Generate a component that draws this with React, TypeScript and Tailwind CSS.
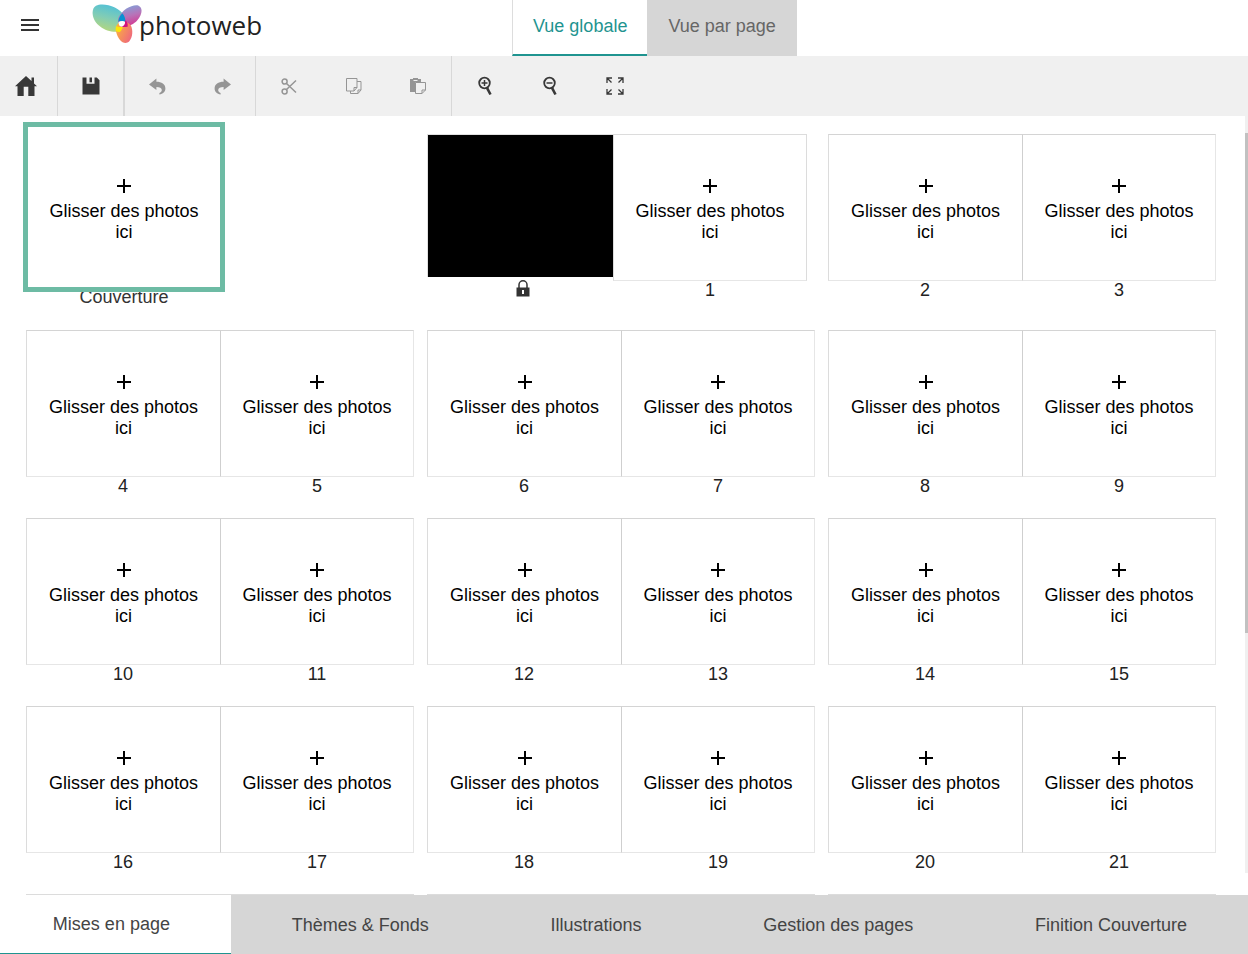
import React from "react"
import clsx from "clsx"

type IconProps = { className?: string }

function HomeIcon() {
  return (
    <svg width="22" height="20" viewBox="0 0 22 20" fill="currentColor" aria-hidden="true">
      <path d="M11 0 16.500 5V1.600H19v5.800l3 2.900h-2.500V20h-6.200v-9.300H8.700V20H2.500v-9.700H0z" />
    </svg>
  )
}

function SaveIcon() {
  return (
    <svg width="18" height="18" viewBox="0 0 18 18" fill="currentColor" aria-hidden="true">
      <path d="M.5.5H4.500v6.200h8V.5h2.300l2.700 2.700v14.300H.5z" />
      <path d="M7.500.5h2.500v4.800H7.500z" />
    </svg>
  )
}

function UndoIcon({ className }: IconProps) {
  return (
    <svg width="17" height="17" viewBox="0 0 17 17" fill="currentColor" className={className} aria-hidden="true">
      <path d="M0 6.400 7.400.5v3.300c5.200 0 9 2.400 9 6.700 0 3.200-2.500 5.500-6 5.900v-1.300c1.500-.6 2.400-1.600 2.400-3 0-2.200-2.100-3.200-5.400-3.200V12z" />
    </svg>
  )
}

function CutIcon() {
  return (
    <svg width="16" height="17" viewBox="0 0 16 17" fill="none" stroke="currentColor" strokeWidth="1.500" aria-hidden="true">
      <circle cx="3.600" cy="3.600" r="2.500" />
      <circle cx="3.600" cy="13.400" r="2.500" />
      <path d="M5.500 5.500 15 14.500M5.500 11.500 15 2.500" />
    </svg>
  )
}

function CopyIcon() {
  return (
    <svg width="16" height="17" viewBox="0 0 16 17" fill="none" stroke="currentColor" aria-hidden="true">
      <path d="M.5.500h10.500v9l-3 3.500H.5zM11 9.500H8V13" />
      <path d="M11 3.500h4v8.500l-3 3.500H4.500V13M15 12h-3v3.500" />
    </svg>
  )
}

function PasteIcon() {
  return (
    <svg width="17" height="17" viewBox="0 0 17 17" fill="none" stroke="currentColor" aria-hidden="true">
      <path d="M0 1h3V0h5v1h3v3H5.500v10H0z" fill="currentColor" stroke="none" />
      <path d="M3.500 2.500h4" stroke="#f0f0f0" />
      <path d="M5.500 4.500h10v7.500l-3.500 3.500H5.500zM15.500 12H12v3.500" fill="#f0f0f0" />
    </svg>
  )
}

function ZoomIcon({ plus }: { plus?: boolean }) {
  return (
    <svg width="16" height="20" viewBox="0 0 16 20" fill="none" stroke="currentColor" aria-hidden="true">
      <circle cx="7.500" cy="7" r="5.300" strokeWidth="1.800" />
      <path d="m10 11.800 3.500 6.700" strokeWidth="2.600" />
      <path d={plus ? "M4.500 7h6M7.500 4v6" : "M4.500 7h6"} strokeWidth="1.500" />
    </svg>
  )
}

function FullscreenIcon() {
  return (
    <svg width="18" height="18" viewBox="0 0 18 18" fill="none" stroke="currentColor" strokeWidth="1.300" aria-hidden="true">
      <path d="M1 6V1h5M1 1l4.500 4.500M12 1h5v5M17 1l-4.500 4.500M1 12v5h5M1 17l4.500-4.500M17 12v5h-5M17 17l-4.500-4.500" />
    </svg>
  )
}

function LockIcon() {
  return (
    <svg width="14" height="17" viewBox="0 0 14 17" aria-hidden="true">
      <path d="M3 8V4.800a4 4 0 0 1 8 0V8" fill="none" stroke="#333" strokeWidth="1.500" />
      <path d="M.500 7.500h13v9H.500z" fill="#333" />
      <path d="M6 10h2v4H6z" fill="#fff" />
    </svg>
  )
}

function Logo() {
  return (
    <a href="#" aria-label="photoweb" className="flex items-center">
      <svg width="50" height="40" viewBox="0 0 150 120" aria-hidden="true">
        <defs>
          <linearGradient id="wingLeft" x1="0.600" y1="0" x2="0.300" y2="1">
            <stop offset="0" stopColor="#4fc0d8" />
            <stop offset="0.500" stopColor="#83cdb4" />
            <stop offset="1" stopColor="#b9d878" />
          </linearGradient>
          <linearGradient id="wingRight" x1="0.300" y1="0" x2="0.600" y2="1">
            <stop offset="0" stopColor="#7fa3da" />
            <stop offset="0.500" stopColor="#b873b8" />
            <stop offset="1" stopColor="#d6338f" />
          </linearGradient>
          <linearGradient id="wingBottom" x1="0" y1="0.200" x2="1" y2="0.800">
            <stop offset="0" stopColor="#fbb43c" />
            <stop offset="1" stopColor="#ee6480" />
          </linearGradient>
        </defs>
        <path d="M12 5C34-6 82 8 98 36c8 16 4 42-18 47C44 88 4 62 2 30 1 20 4 9 12 5z" fill="url(#wingLeft)" />
        <path d="M80 40C92 16 122 0 140 5c14 7 10 28-4 44-12 14-32 22-46 18-10-4-14-16-10-27z" fill="url(#wingRight)" />
        <path d="M74 64c10-16 32-14 42 0 8 14 6 36-4 48-8 8-20 6-28-4-10-12-16-32-10-44z" fill="url(#wingBottom)" />
        <path d="M79 53c1-11 5-18 12-25 7 8 10 17 9 27-8-4-14-4-21-2z" fill="#0a90d2" />
        <path d="M100 49c6 5 8 11 7 19-7 1-14 2-22 0 8-4 13-10 15-19z" fill="#d1127f" />
        <path d="M72 66c5 3 10 4 20 2-1 7-4 12-9 16-5 0-9 0-12-2 0-6 0-11 1-16z" fill="#fbe50a" />
        <path d="M80 54c6-4 14-4 19-1 1 7-3 12-10 15-7 0-10-6-9-14z" fill="#fff" />
      </svg>
      <span className="-ml-[3px] pt-0.5 font-['Open_Sans',sans-serif] text-[26px] leading-10 text-[#222]">
        photoweb
      </span>
    </a>
  )
}

function ToolGroup({ className, children }: { className?: string; children: React.ReactNode }) {
  return (
    <div className={clsx("flex border-[#d8d8d8] last:border-r-0", className ?? "border-r")}>{children}</div>
  )
}

function ToolButton({
  label,
  disabled,
  className,
  children,
}: {
  label: string
  disabled?: boolean
  className?: string
  children: React.ReactNode
}) {
  return (
    <button
      type="button"
      aria-label={label}
      disabled={disabled}
      className={clsx(
        "flex items-center justify-center",
        disabled ? "text-[#959595]" : "text-[#383838]",
        className ?? "w-[65px]"
      )}
    >
      {children}
    </button>
  )
}

function DropZone({ className }: { className?: string }) {
  return (
    <button
      type="button"
      className={clsx(
        "flex h-[147px] w-full flex-col items-center justify-center gap-2 px-5 pt-[7px] text-black",
        className
      )}
    >
      <svg width="14" height="14" viewBox="0 0 14 14" stroke="currentColor" strokeWidth="2" aria-hidden="true">
        <path d="M0 7h14M7 0v14" />
      </svg>
      <span className="leading-[21px]">Glisser des photos ici</span>
    </button>
  )
}

function Page({ label, className }: { label: number; className?: string }) {
  return (
    <div className="w-1/2">
      <DropZone className={clsx("border-y border-t-[#d4d4d4] border-b-[#e6e6e6]", className)} />
      <div className="h-[21px] text-center leading-[19px] text-[#222]">{label}</div>
    </div>
  )
}

function Spread({ first }: { first: number }) {
  return (
    <div className="flex">
      <Page label={first} className="border-l border-l-[#dcdcdc]" />
      <Page label={first + 1} className="border-x border-l-[#cfcfcf] border-r-[#e6e6e6]" />
    </div>
  )
}

function SpreadPlaceholder() {
  return <div className="h-[168px] border-t border-[#dcdcdc]" />
}

function Cover() {
  return (
    <div className="relative w-[196px]">
      <DropZone />
      <div className="pt-1.5 pb-0.5 text-center leading-[21px] text-[#333]">Couverture</div>
      {/* selection frame */}
      <div className="pointer-events-none absolute -inset-x-[3px] -top-3 h-[170px] border-[5px] border-[#6dbba4]" />
    </div>
  )
}

function InsideCover() {
  return (
    <div className="flex pr-2">
      <div className="flex w-[186px] flex-col items-center">
        <div className="h-[143px] w-full border-t border-l border-[#e0e0e0] bg-black" />
        <div className="pt-[3px] pl-1.5">
          <LockIcon />
        </div>
      </div>
      <div className="flex-1">
        <DropZone className="border border-[#dcdcdc] border-b-[#e6e6e6]" />
        <div className="h-[21px] text-center leading-[19px] text-[#222]">1</div>
      </div>
    </div>
  )
}

const SPREADS = [2, 4, 6, 8, 10, 12, 14, 16, 18, 20]

const FOOTER_TABS = ["Mises en page", "Thèmes & Fonds", "Illustrations", "Gestion des pages", "Finition Couverture"]

export default function App() {
  return (
    <div className="flex h-screen flex-col overflow-hidden bg-white font-['Liberation_Sans',Arial,sans-serif] text-lg">
      <header className="flex h-14 shrink-0">
        <div className="flex w-128 items-start pl-[21px] pt-[3px]">
          <button type="button" aria-label="Menu" className="mr-[53px] mt-[15px] text-[#333]">
            <svg width="18" height="14" viewBox="0 0 18 14" stroke="currentColor" strokeWidth="2" aria-hidden="true">
              <path d="M0 2h18M0 7h18M0 12h18" />
            </svg>
          </button>
          <Logo />
        </div>
        <nav className="flex">
          <button
            type="button"
            className="border-b-2 border-l border-b-[#1f9490] border-l-[#ddd] px-5 pb-0.5 text-[#1f9490]"
          >
            Vue globale
          </button>
          <button type="button" className="bg-[#d6d6d6] px-[21px] pb-1 text-[#666]">
            Vue par page
          </button>
        </nav>
      </header>

      <div className="flex h-[60px] shrink-0 bg-[#f0f0f0]">
        <ToolGroup>
          <ToolButton label="Accueil" className="w-[57px] pr-1.5">
            <HomeIcon />
          </ToolButton>
        </ToolGroup>
        <ToolGroup className="border-r-2">
          <ToolButton label="Enregistrer">
            <SaveIcon />
          </ToolButton>
        </ToolGroup>
        <ToolGroup>
          <ToolButton label="Annuler" disabled>
            <UndoIcon />
          </ToolButton>
          <ToolButton label="Rétablir" disabled>
            <UndoIcon className="-scale-x-100" />
          </ToolButton>
        </ToolGroup>
        <ToolGroup>
          <ToolButton label="Couper" disabled>
            <CutIcon />
          </ToolButton>
          <ToolButton label="Copier" disabled>
            <CopyIcon />
          </ToolButton>
          <ToolButton label="Coller" disabled>
            <PasteIcon />
          </ToolButton>
        </ToolGroup>
        <ToolGroup>
          <ToolButton label="Zoom avant">
            <ZoomIcon plus />
          </ToolButton>
          <ToolButton label="Zoom arrière">
            <ZoomIcon />
          </ToolButton>
          <ToolButton label="Plein écran">
            <FullscreenIcon />
          </ToolButton>
        </ToolGroup>
      </div>

      <main className="flex min-h-0 flex-1">
        <div className="grid flex-1 grid-cols-3 content-start gap-x-[13px] gap-y-5 overflow-hidden pl-[26px] pr-[29px] pt-[18px]">
          <Cover />
          <InsideCover />
          {SPREADS.map((n) => (
            <Spread key={n} first={n} />
          ))}
          <SpreadPlaceholder />
          <SpreadPlaceholder />
          <SpreadPlaceholder />
        </div>
        <div className="mb-[22px] w-[3px] bg-[#f0f0f0] pt-[17px]">
          <div className="h-[500px] bg-[#c1c1c1]" />
        </div>
      </main>

      <footer className="flex h-[59px] shrink-0 bg-[#d6d6d6] text-[#444]">
        {FOOTER_TABS.map((tab, i) => (
          <button
            key={tab}
            type="button"
            className={clsx(
              "flex-auto whitespace-nowrap",
              i === 0 ? "border-b border-b-[#1f9490] bg-white pr-2" : "px-2"
            )}
          >
            {tab}
          </button>
        ))}
      </footer>
    </div>
  )
}
